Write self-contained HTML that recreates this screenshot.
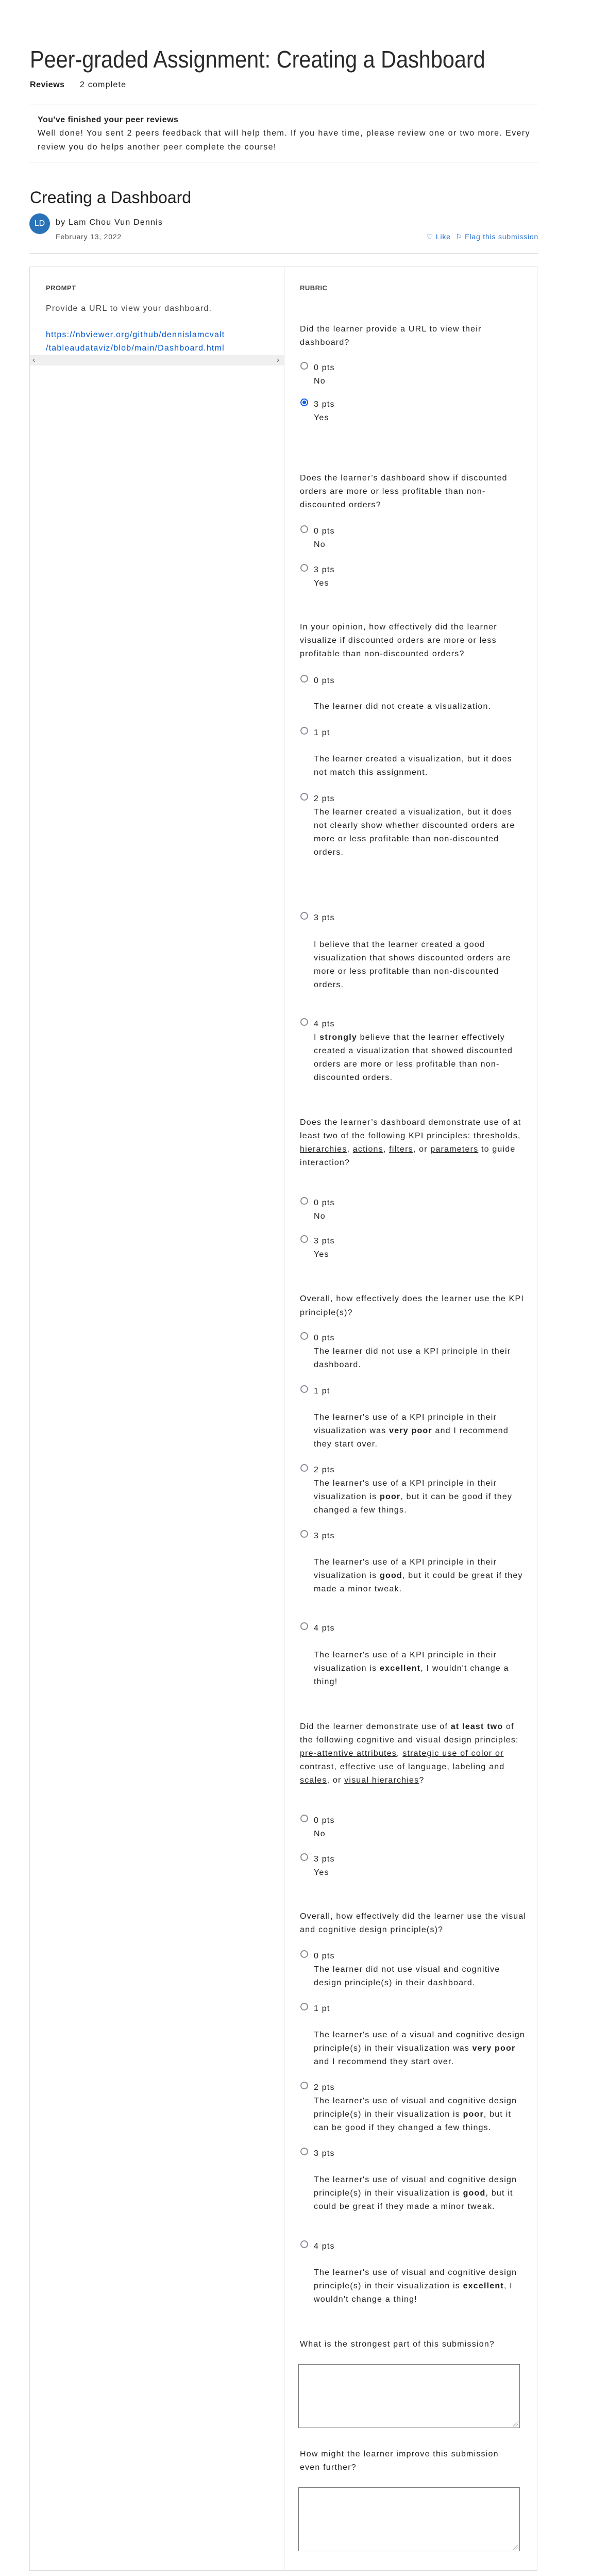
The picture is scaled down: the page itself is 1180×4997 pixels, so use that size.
<!DOCTYPE html>
<html><head><meta charset="utf-8">
<style>
*{margin:0;padding:0;box-sizing:border-box}
body{width:1180px;height:4997px;background:#fff;font-family:"Liberation Sans",sans-serif;color:#1f1f1f;position:relative;overflow:hidden;font-size:16px}
.a{position:absolute;white-space:nowrap;line-height:26px;letter-spacing:1.2px}
.hr{position:absolute;left:57px;width:988px;height:1px;background:#dcdcdc}
.r{position:absolute;left:583px;width:15px;height:15px;border:2px solid #8c8c9c;border-radius:50%}
.rc{border-color:#0a5fe0}
.rc::after{content:"";position:absolute;left:2px;top:2px;width:7px;height:7px;border-radius:50%;background:#0a5fe0}
.t{left:609px}
.q{left:582px}
u{text-decoration:underline}
.ta{position:absolute;left:579px;width:430px;height:124px;border:1px solid #757575}
.ta::after{content:"";position:absolute;right:2px;bottom:2px;width:10px;height:10px;background:linear-gradient(135deg,transparent 45%,#999 45%,#999 52%,transparent 52%,transparent 70%,#999 70%,#999 77%,transparent 77%)}
</style></head><body>
<div class="a" style="left:58px;top:88px;font-size:46px;line-height:54px;letter-spacing:0;color:#2a2a2a;transform:scaleX(.9);transform-origin:left">Peer-graded Assignment: Creating a Dashboard</div>
<div class="a" style="left:58px;top:152px;font-weight:bold;letter-spacing:.5px">Reviews</div>
<div class="a" style="left:155px;top:152px">2 complete</div>
<div class="hr" style="top:203px"></div>
<div class="a" style="left:73px;top:220px;font-weight:bold;letter-spacing:.5px">You've finished your peer reviews</div>
<div class="a" style="left:73px;top:245px;line-height:27px;letter-spacing:1.4px">Well done! You sent 2 peers feedback that will help them. If you have time, please review one or two more. Every<br>review you do helps another peer complete the course!</div>
<div class="hr" style="top:314px"></div>
<div class="a" style="left:58px;top:363px;font-size:32px;line-height:40px;letter-spacing:0">Creating a Dashboard</div>
<div style="position:absolute;left:57px;top:414px;width:40px;height:40px;border-radius:50%;background:#2a73b8;color:#fff;font-size:16px;line-height:40px;text-align:center">LD</div>
<div class="a" style="left:108px;top:419px">by Lam Chou Vun Dennis</div>
<div class="a" style="left:108px;top:448px;font-size:14px;line-height:22px;color:#555;letter-spacing:.8px">February 13, 2022</div>
<div class="a" style="right:135px;top:448px;font-size:14px;line-height:22px;color:#2a6fd0;letter-spacing:.8px">♡ Like &nbsp;⚐ Flag this submission</div>
<div class="hr" style="top:491px"></div>
<div style="position:absolute;left:57px;top:517px;width:986px;height:4470px;border:1px solid #dcdcdc"></div>
<div style="position:absolute;left:551px;top:517px;width:1px;height:4470px;background:#dcdcdc"></div>
<div class="a" style="left:89px;top:549px;font-size:13px;line-height:20px;font-weight:bold;color:#444;letter-spacing:.5px">PROMPT</div>
<div class="a" style="left:582px;top:549px;font-size:13px;line-height:20px;font-weight:bold;color:#444;letter-spacing:.5px">RUBRIC</div>
<div class="a" style="left:89px;top:586px;color:#444">Provide a URL to view your dashboard.</div>
<div class="a" style="left:89px;top:637px;color:#0056d2">https://nbviewer.org/github/dennislamcvalt<br>/tableaudataviz/blob/main/Dashboard.html</div>
<div style="position:absolute;left:58px;top:689px;width:493px;height:20px;background:#efefef"></div>
<div class="a" style="left:63px;top:686px;color:#666">‹</div>
<div class="a" style="left:537px;top:686px;color:#666">›</div>

<div class="a q" style="top:626px">Did the learner provide a URL to view their<br>dashboard?</div>
<div class="r" style="top:702px"></div><div class="a t" style="top:701px">0 pts<br>No</div>
<div class="r rc" style="top:773px"></div><div class="a t" style="top:772px">3 pts<br>Yes</div>

<div class="a q" style="top:915px">Does the learner’s dashboard show if discounted<br>orders are more or less profitable than non-<br>discounted orders?</div>
<div class="r" style="top:1019px"></div><div class="a t" style="top:1018px">0 pts<br>No</div>
<div class="r" style="top:1094px"></div><div class="a t" style="top:1093px">3 pts<br>Yes</div>

<div class="a q" style="top:1204px">In your opinion, how effectively did the learner<br>visualize if discounted orders are more or less<br>profitable than non-discounted orders?</div>
<div class="r" style="top:1309px"></div><div class="a t" style="top:1308px">0 pts</div>
<div class="a t" style="top:1358px">The learner did not create a visualization.</div>
<div class="r" style="top:1410px"></div><div class="a t" style="top:1409px">1 pt</div>
<div class="a t" style="top:1460px">The learner created a visualization, but it does<br>not match this assignment.</div>
<div class="r" style="top:1538px"></div><div class="a t" style="top:1537px">2 pts<br>The learner created a visualization, but it does<br>not clearly show whether discounted orders are<br>more or less profitable than non-discounted<br>orders.</div>
<div class="r" style="top:1769px"></div><div class="a t" style="top:1768px">3 pts</div>
<div class="a t" style="top:1820px">I believe that the learner created a good<br>visualization that shows discounted orders are<br>more or less profitable than non-discounted<br>orders.</div>
<div class="r" style="top:1975px"></div><div class="a t" style="top:1974px">4 pts<br>I <b>strongly</b> believe that the learner effectively<br>created a visualization that showed discounted<br>orders are more or less profitable than non-<br>discounted orders.</div>

<div class="a q" style="top:2165px">Does the learner’s dashboard demonstrate use of at<br>least two of the following KPI principles: <u>thresholds</u>,<br><u>hierarchies</u>, <u>actions</u>, <u>filters</u>, or <u>parameters</u> to guide<br>interaction?</div>
<div class="r" style="top:2322px"></div><div class="a t" style="top:2321px">0 pts<br>No</div>
<div class="r" style="top:2396px"></div><div class="a t" style="top:2395px">3 pts<br>Yes</div>

<div class="a q" style="top:2506px;line-height:27px">Overall, how effectively does the learner use the KPI<br>principle(s)?</div>
<div class="r" style="top:2584px"></div><div class="a t" style="top:2583px">0 pts<br>The learner did not use a KPI principle in their<br>dashboard.</div>
<div class="r" style="top:2687px"></div><div class="a t" style="top:2686px">1 pt</div>
<div class="a t" style="top:2737px">The learner's use of a KPI principle in their<br>visualization was <b>very poor</b> and I recommend<br>they start over.</div>
<div class="r" style="top:2840px"></div><div class="a t" style="top:2839px">2 pts<br>The learner's use of a KPI principle in their<br>visualization is <b>poor</b>, but it can be good if they<br>changed a few things.</div>
<div class="r" style="top:2968px"></div><div class="a t" style="top:2967px">3 pts</div>
<div class="a t" style="top:3018px">The learner's use of a KPI principle in their<br>visualization is <b>good</b>, but it could be great if they<br>made a minor tweak.</div>
<div class="r" style="top:3147px"></div><div class="a t" style="top:3146px">4 pts</div>
<div class="a t" style="top:3198px">The learner's use of a KPI principle in their<br>visualization is <b>excellent</b>, I wouldn't change a<br>thing!</div>

<div class="a q" style="top:3337px">Did the learner demonstrate use of <b>at least two</b> of<br>the following cognitive and visual design principles:<br><u>pre-attentive attributes</u>, <u>strategic use of color or </u><br><u>contrast</u>, <u>effective use of language, labeling and </u><br><u>scales</u>, or <u>visual hierarchies</u>?</div>
<div class="r" style="top:3520px"></div><div class="a t" style="top:3519px">0 pts<br>No</div>
<div class="r" style="top:3595px"></div><div class="a t" style="top:3594px">3 pts<br>Yes</div>

<div class="a q" style="top:3705px">Overall, how effectively did the learner use the visual<br>and cognitive design principle(s)?</div>
<div class="r" style="top:3783px"></div><div class="a t" style="top:3782px">0 pts<br>The learner did not use visual and cognitive<br>design principle(s) in their dashboard.</div>
<div class="r" style="top:3885px"></div><div class="a t" style="top:3884px">1 pt</div>
<div class="a t" style="top:3935px">The learner's use of a visual and cognitive design<br>principle(s) in their visualization was <b>very poor</b><br>and I recommend they start over.</div>
<div class="r" style="top:4038px"></div><div class="a t" style="top:4037px">2 pts<br>The learner's use of visual and cognitive design<br>principle(s) in their visualization is <b>poor</b>, but it<br>can be good if they changed a few things.</div>
<div class="r" style="top:4166px"></div><div class="a t" style="top:4165px">3 pts</div>
<div class="a t" style="top:4216px">The learner's use of visual and cognitive design<br>principle(s) in their visualization is <b>good</b>, but it<br>could be great if they made a minor tweak.</div>
<div class="r" style="top:4346px"></div><div class="a t" style="top:4345px">4 pts</div>
<div class="a t" style="top:4396px">The learner's use of visual and cognitive design<br>principle(s) in their visualization is <b>excellent</b>, I<br>wouldn't change a thing!</div>

<div class="a q" style="top:4535px">What is the strongest part of this submission?</div>
<div class="ta" style="top:4586px"></div>
<div class="a q" style="top:4748px">How might the learner improve this submission<br>even further?</div>
<div class="ta" style="top:4825px"></div>
</body></html>
